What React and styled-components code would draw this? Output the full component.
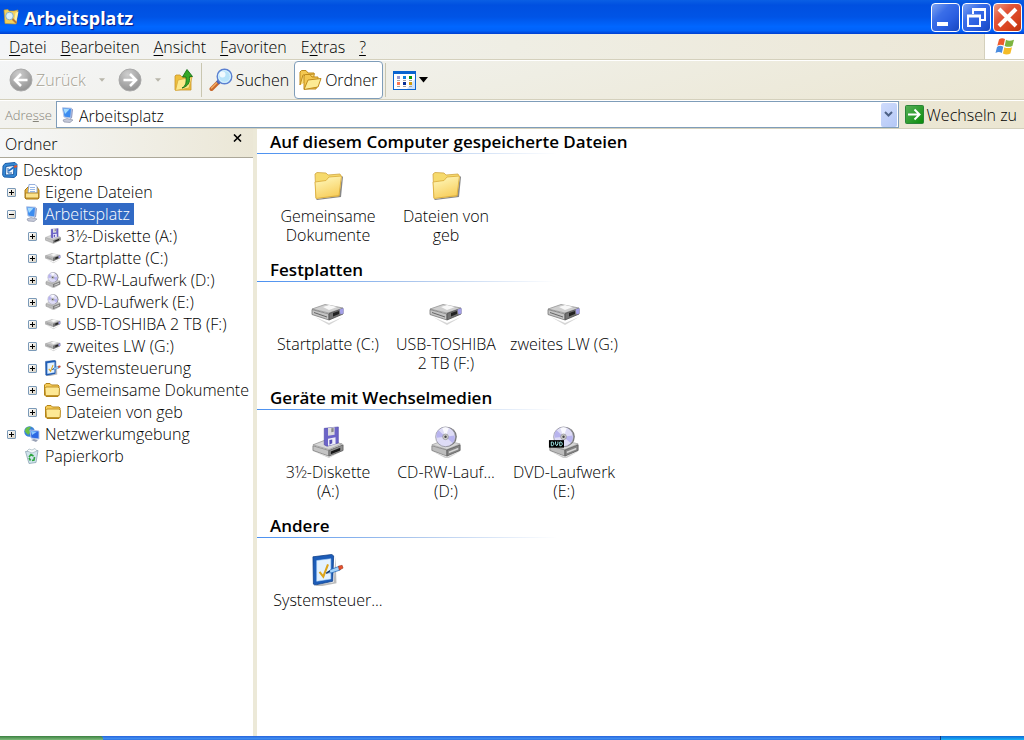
import React from "react";
import styled, { createGlobalStyle } from "styled-components";

const GlobalStyle = createGlobalStyle`
  * {
    box-sizing: border-box;
  }
  body {
    margin: 0;
    background: white;
    color: black;
    font-family: "Open Sans", "Noto Sans", sans-serif;
    font-size: 16px;
    font-weight: 300;
    line-height: 20px;
  }
  button,
  input {
    font: inherit;
    color: inherit;
    margin: 0;
    padding: 0;
    border: 0;
    background: none;
  }
  svg {
    display: block;
    flex: none;
  }
`;

const Window = styled.div`
  display: flex;
  flex-direction: column;
  min-height: 100vh;
`;

const TitleBar = styled.header`
  display: flex;
  align-items: center;
  height: 34px;
  padding: 0 2px 0 3px;
  gap: 5px;
  background: linear-gradient(
    #0a5fe4 0%,
    #0050e0 15%,
    #0054e6 50%,
    #0066ff 78%,
    #0062fa 90%,
    #003fd0 100%
  );
`;

const Title = styled.h1`
  flex: 1;
  margin: 0;
  padding-top: 1px;
  font-family: "Noto Sans", sans-serif;
  font-size: 18px;
  font-weight: 700;
  line-height: 24px;
  color: white;
  text-shadow: 1px 1px 1px #0a1883;
`;

const WindowButtons = styled.div`
  display: flex;
  gap: 2px;
`;

const WindowButton = styled.button`
  display: grid;
  place-items: center;
  width: 29px;
  height: 29px;
  border: 1px solid white;
  border-radius: 4px;
  background: ${(props) =>
    props.$close
      ? "linear-gradient(135deg, #eb9a84, #e2553a 35%, #d8431f 70%, #b8330f)"
      : "linear-gradient(135deg, #7ea4f2, #3a6ee8 35%, #2a5ee0 65%, #1746c0)"};
`;

const MenuBar = styled.nav`
  display: flex;
  height: 26px;
  border-bottom: 1px solid #d4d0bc;
  background: linear-gradient(90deg, #f4f5f6, #efeee4 50%, #ece7d6);
`;

const MenuItems = styled.div`
  display: flex;
  flex: 1;
  padding-left: 2px;
`;

const MenuItem = styled.button`
  padding: 0 7px;
  u {
    text-underline-offset: 2px;
  }
`;

const Flag = styled.div`
  display: grid;
  place-items: center;
  width: 40px;
  border-left: 1px solid #d4d0bc;
  background: white;
`;

const ToolBar = styled.div`
  display: flex;
  align-items: center;
  height: 40px;
  padding-left: 4px;
  border-top: 1px solid white;
  border-bottom: 1px solid #d4d0bc;
  background: linear-gradient(165deg, #f4f5f6, #efeee4 50%, #ebe6d2);
`;

const ToolButton = styled.button`
  display: flex;
  align-items: center;
  gap: 3px;
  height: 38px;
  padding: 0 4px;
  border: 1px solid ${(props) => (props.$pressed ? "#7f9db9" : "transparent")};
  border-radius: 4px;
  background: ${(props) => (props.$pressed ? "white" : "none")};
  &:disabled {
    color: #a5a294;
    text-shadow: 1px 1px 0 white;
  }
`;

const DropButton = styled.button`
  display: grid;
  place-items: center;
  width: 22px;
  height: 36px;
`;

const Separator = styled.div`
  width: 1px;
  height: 34px;
  margin: 0 2px;
  background: #c9c6b0;
`;

const AddressBar = styled.form`
  display: flex;
  height: 29px;
  border-top: 1px solid white;
  border-bottom: 1px solid #d4d0bc;
  background: linear-gradient(90deg, #f2f2ee, #ece8d8 60%, #ebe6d2);
`;

const AddressLabel = styled.label`
  width: 56px;
  padding: 4px 0 0 5px;
  font-size: 13px;
  color: #86847a;
`;

const AddressField = styled.div`
  display: flex;
  align-items: center;
  flex: 1;
  border: 1px solid #7f9db9;
  background: white;
  padding: 0 1px 0 3px;
  gap: 3px;
`;

const AddressInput = styled.input`
  flex: 1;
  min-width: 0;
  height: 24px;
  padding-top: 2px;
  outline: none;
`;

const AddressDrop = styled.button`
  display: grid;
  place-items: center;
  width: 16px;
  height: 24px;
  border-radius: 2px;
  background: linear-gradient(135deg, #cfdcfc, #b4c8f6);
`;

const GoButton = styled.button`
  display: flex;
  align-items: center;
  gap: 3px;
  padding: 0 7px 0 6px;
`;

const Main = styled.div`
  display: flex;
  flex: 1;
`;

const Sidebar = styled.aside`
  flex: none;
  width: 257px;
  border-right: 4px solid #ece9d8;
`;

const SidebarHeader = styled.div`
  display: flex;
  justify-content: space-between;
  height: 29px;
  padding: 4px 9px 0 5px;
  border-bottom: 1px solid #aca899;
  background: linear-gradient(90deg, #f6f7f8, #ebe7d6);
`;

const SidebarTitle = styled.h2`
  margin: 0;
  font-size: 16px;
  font-weight: 300;
  line-height: 22px;
`;

const CloseButton = styled.button`
  display: grid;
  place-items: center;
  width: 13px;
  height: 9px;
`;

const Tree = styled.ul`
  list-style: none;
  margin: 0;
  padding: 1px 0 0;
`;

const TreeRow = styled.li`
  display: flex;
  align-items: center;
  height: 22px;
  padding-left: ${(props) => 2 + Math.max(props.$level - 1, 0) * 21}px;
`;

const ExpanderSlot = styled.span`
  width: 22px;
  padding-left: 5px;
`;

const Expander = styled.button`
  display: grid;
  place-items: center;
  width: 9px;
  height: 9px;
  border: 1px solid #7b9ab8;
  border-radius: 1px;
  background: linear-gradient(135deg, white, #d8d2c4);
`;

const TreeLabel = styled.span`
  margin-left: 3px;
  padding: 0 4px 0 2px;
  line-height: 22px;
  white-space: nowrap;
  color: ${(props) => (props.$selected ? "white" : "black")};
  background: ${(props) => (props.$selected ? "#316ac5" : "none")};
`;

const Content = styled.main`
  flex: 1;
  padding-top: 1px;
`;

const SectionTitle = styled.h2`
  height: 24px;
  margin: 0;
  padding-left: 13px;
  font-size: 17px;
  font-weight: 600;
  line-height: 24px;
  background: linear-gradient(90deg, #4a90f0, #a8c4ec 50%, white) no-repeat left
    bottom / 300px 1px;
`;

const Items = styled.div`
  display: flex;
  flex-wrap: wrap;
  min-height: 104px;
  padding: 16px 0 10px 12px;
`;

const Item = styled.button`
  display: flex;
  flex-direction: column;
  align-items: center;
  gap: 5px;
  width: 118px;
  padding: 0 4px;
  line-height: 19px;
`;

const TaskBar = styled.footer`
  display: flex;
  height: 4px;
  background: linear-gradient(#2663dc, #3f8cf0 60%, #2f74e0);
`;

const StartEdge = styled.div`
  width: 103px;
  border-radius: 0 3px 0 0;
  background: linear-gradient(#3a8040, #7fbb7c);
`;

const TrayEdge = styled.div`
  width: 84px;
  margin-left: auto;
  border-left: 1px solid #123a78;
  background: linear-gradient(#1268d8, #18b4f4);
`;

const TitleIcon = () => (
  <svg width="16" height="16" viewBox="0 0 16 16">
    <path d="M1 1l4-.5 1 1.500h5l4-1-.5 3L13 15l-11-.5z" fill="#f4d25c" stroke="#c89a28" strokeWidth=".6" />
    <path d="M12.500 4l3-1.500-2.500 12-2-2z" fill="#fff0a0" />
    <circle cx="6.500" cy="7" r="3.800" fill="#d8f0fa" stroke="#8cb0c4" />
    <path d="M9.500 10l4 4" stroke="#b87838" strokeWidth="2" />
  </svg>
);

const FlagIcon = () => (
  <svg width="20" height="19" viewBox="0 0 20 19">
    <path d="M4 2.500c2-1.700 4-1.700 6-.4L8.600 8.600c-2-1.300-4-1.300-6.300.2z" fill="#ee5a2c" />
    <path d="M11 2.700c2 1.200 4.300 1.300 8 0L17.400 9c-2.800 1.200-5 1.100-7.700 0z" fill="#7cb440" />
    <path d="M2 10c2-1.700 4-1.600 6.300-.3l-1.500 6.200c-2-1.300-4-1.300-6.300.2z" fill="#4a8ce0" />
    <path d="M9.400 10.200c2.200 1.200 4.700 1.200 7.600 0l-1.600 6.200c-2.500 1.400-5 1.400-7.500 0z" fill="#f4bc28" />
  </svg>
);

const ArrowCircle = ({ forward }) => (
  <svg width="24" height="24" viewBox="0 0 24 24">
    <defs>
      <radialGradient id="greyBall" cx=".4" cy=".25" r=".8">
        <stop offset="0" stopColor="#cecece" />
        <stop offset="1" stopColor="#8e8e8e" />
      </radialGradient>
    </defs>
    <circle cx="12" cy="12" r="11" fill="url(#greyBall)" stroke="#aaa" />
    <path
      d={forward ? "M5.500 12h12M12 6l6 6-6 6" : "M18.500 12h-12M12 6l-6 6 6 6"}
      fill="none"
      stroke="white"
      strokeWidth="2.600"
    />
  </svg>
);

const Caret = ({ color = "black", size = 6 }) => (
  <svg width={size} height={size / 2 + 1} viewBox="0 0 10 6">
    <path d="M0 0h10L5 6z" fill={color} />
  </svg>
);

const UpIcon = () => (
  <svg width="20" height="24" viewBox="0 0 20 24">
    <path d="M1 8l1-1h4l2 2h9v13H1z" fill="#eebf3c" stroke="#c8962a" strokeWidth=".8" />
    <path d="M1.500 22.500L4 12l14-3-3 11z" fill="#fde98c" stroke="#d8a838" strokeWidth=".8" />
    <path d="M8 20c4-2 4.500-6 4-11H8.500L13 1.500l5.500 7H15.500c.7 6-1.500 10-7.500 11.500z" fill="#35a828" stroke="#187018" strokeWidth=".9" />
  </svg>
);

const SearchIcon = () => (
  <svg width="24" height="24" viewBox="0 0 24 24">
    <path d="M2.500 21l7-7" stroke="#c8682c" strokeWidth="4" strokeLinecap="round" />
    <path d="M2.500 20l6-6" stroke="#f4ac64" strokeWidth="1.400" strokeLinecap="round" />
    <path d="M8.500 15l2-2" stroke="#4c64b8" strokeWidth="4" />
    <circle cx="15.500" cy="8.500" r="7.300" fill="#b8e4fa" stroke="#5c80d0" strokeWidth="1.400" />
    <circle cx="15.500" cy="8.500" r="5.800" fill="none" stroke="#dcf2fe" />
    <circle cx="13.500" cy="6.500" r="3" fill="white" opacity=".8" />
  </svg>
);

const FoldersIcon = () => (
  <svg width="23" height="22" viewBox="0 0 23 22">
    <path d="M1 16V3l1.500-1.500H7l2 2.500h6v4" fill="#f4c850" stroke="#c08c1c" />
    <path d="M1 16L4 6l12-1" fill="#fbe080" stroke="#c08c1c" />
    <path d="M5 20V7l1.500-1.500H11l2 2.500h6v4l-2 8z" fill="#f4c850" stroke="#c08c1c" />
    <path d="M5 20.500L9 11l13-1.500L19 18z" fill="#fdeb94" stroke="#c08c1c" />
  </svg>
);

const ViewsIcon = () => (
  <svg width="23" height="19" viewBox="0 0 23 19">
    <rect x=".5" y=".5" width="22" height="18" fill="white" stroke="#0a64d0" />
    <path d="M14 18l8-10v10z" fill="#cfe2fa" />
    <path d="M0 0h23v3H0z" fill="#0a64d0" />
    <path d="M4 5h3v3H4z" fill="#9a98d0" />
    <path d="M10 5h3v3h-3z" fill="#0a80e0" />
    <path d="M16 5h3v3h-3z" fill="#0a980a" />
    <path d="M4 11h3v3H4z" fill="#ff7850" />
    <path d="M10 11h3v3h-3z" fill="#083098" />
    <path d="M16 11h3v3h-3z" fill="#d09a08" />
    <path d="M4 9.500h3M10 9.500h3M16 9.500h3M4 15.500h3M10 15.500h3M16 15.500h3" stroke="#a4a4a4" />
  </svg>
);

const GoIcon = () => (
  <svg width="19" height="19" viewBox="0 0 19 19">
    <defs>
      <linearGradient id="goGreen" x1="0" y1="0" x2="1" y2="1">
        <stop offset="0" stopColor="#58b058" />
        <stop offset="1" stopColor="#0a8c0a" />
      </linearGradient>
    </defs>
    <rect x=".5" y=".5" width="18" height="18" rx="1" fill="url(#goGreen)" stroke="#2c8438" />
    <path d="M3 9.500h11M9.500 4.500l5 5-5 5" fill="none" stroke="white" strokeWidth="2" />
  </svg>
);

const ComputerIcon = () => (
  <svg width="16" height="16" viewBox="0 0 16 16">
    <path d="M3 13l4-1.500 6 1.500-3 2.500-6-.5z" fill="#c4c8d8" stroke="#8088a0" strokeWidth=".6" />
    <path d="M11 1l2 1.500-1 8.500-2 1z" fill="#8c94bc" />
    <path d="M2.500.8l9 .4-.8 9.800L4 10z" fill="#3c8cf0" stroke="#b4c4e4" />
    <path d="M3.500 1.800l6 .5L5 7z" fill="#a4dcff" />
  </svg>
);

const DesktopIcon = () => (
  <svg width="16" height="16" viewBox="0 0 16 16">
    <path d="M3 1.500l10-1 2 2-.5 11-2.500 2-10-.5L.7 13 1 4z" fill="#3488d4" stroke="#1c5ca8" />
    <path d="M4 4.500l8-1-.5 9-8 .5z" fill="#f0f8ff" stroke="#0c4894" strokeWidth=".8" />
    <path d="M6.500 9l5.500-4" stroke="#1c6cc8" strokeWidth="1.600" />
    <path d="M12 5l3-1" stroke="#e05028" strokeWidth="2" />
    <path d="M6 6v5h4" fill="none" stroke="#1c5ca8" />
  </svg>
);

const DocumentsIcon = () => (
  <svg width="16" height="16" viewBox="0 0 16 16">
    <path d="M1 6l3-3h9l2 3v8l-1 1H2l-1-1z" fill="#e8b43c" stroke="#a87818" />
    <path d="M5 .5h6l2 2V9H4z" fill="white" stroke="#7c9cd4" strokeWidth=".8" />
    <path d="M6 3.500h5M6 5.500h5M6 7.500h5" stroke="#8cb0e4" strokeWidth=".9" />
    <path d="M1.500 9h13v5h-13z" fill="#fbe28c" stroke="#a87818" strokeWidth=".8" />
  </svg>
);

const NetworkIcon = () => (
  <svg width="16" height="16" viewBox="0 0 16 16">
    <circle cx="5.500" cy="5.500" r="5.300" fill="#3c84d8" />
    <path d="M1 4c1-3 4-4 6-3L5 4l2 2-3 3C3 7 1 7 1 4z" fill="#68c048" />
    <path d="M6 4l9 1v8l-8-1z" fill="#2c68e4" stroke="#b4c4e8" strokeWidth=".9" />
    <path d="M7 5l6 .7L8 9z" fill="#8cc8ff" />
    <path d="M7 14l3-1 4 1-2 2z" fill="#98a0b4" />
  </svg>
);

const TrashIcon = () => (
  <svg width="16" height="16" viewBox="0 0 16 16">
    <path d="M1.500 3.500l12.500-1-2 12-7 1z" fill="#d0e4ec" stroke="#8ca4b4" strokeWidth=".8" />
    <path d="M3 3l2-2 3 1 3-1.500L13 3l-5 2z" fill="#f6fafc" stroke="#94a8b4" strokeWidth=".6" />
    <path d="M5 9l2-2.500L9.500 8M10.500 9l-.5 3-2 .5M6.500 12.500L5 10" fill="none" stroke="#2ca43c" strokeWidth="1.600" />
  </svg>
);

const SmallFolderIcon = () => (
  <svg width="16" height="14" viewBox="0 0 16 14">
    <path d="M.5 12V2L2 .5h4L7.500 2H14l1 1v9l-1 1.500H2z" fill="#f6cc58" stroke="#b48418" />
    <path d="M1 5.500L2 4h12l1.500 1.500L15 12.500H1.500z" fill="#fde894" stroke="#b48418" strokeWidth=".8" />
  </svg>
);

const FolderIcon = () => (
  <svg width="32" height="32" viewBox="0 0 32 32">
    <defs>
      <linearGradient id="folderFront" x1="0" y1="0" x2="0.400" y2="1">
        <stop offset="0" stopColor="#fffbc4" />
        <stop offset="1" stopColor="#f8d060" />
      </linearGradient>
    </defs>
    <path d="M4 29l23-3 3-20 1 1-2 20-24 3z" fill="#555" opacity=".7" />
    <path d="M3 4l2-1.500 9 .5 2 2 12-1 1 2-2 20-23 2z" fill="#f6da6c" stroke="#d0a440" strokeWidth=".8" />
    <path d="M3 12l11-1.500L17 7l12.500-1L27 25.500 4 28.500z" fill="url(#folderFront)" stroke="#dcb040" strokeWidth=".9" />
  </svg>
);

const HardDriveIcon = ({ size = 34 }) => (
  <svg width={size} height={size === 34 ? 32 : 16} viewBox="0 0 34 32">
    <path d="M4 19l14 6 14-6-14 8z" fill="#999" opacity=".4" />
    <path d="M1 11l13-4.500 18 3.500-14 5z" fill="#cfcfcf" stroke="#969696" strokeWidth=".8" />
    <path d="M12 9l6-2 8 2-8 3z" fill="#f8f8f8" />
    <path d="M1 11.500l17 4.500v6L1 16.500z" fill="#c4c4c4" stroke="#777" strokeWidth=".8" />
    <path d="M3 14.500l13 4.500" stroke="#666" />
    <path d="M18 15.500l14-5v5.500l-14 6z" fill="#747474" stroke="#4c4c4c" strokeWidth=".8" />
    <path d="M22 15l6-2v3l-6 2.500z" fill="#222" />
    <path d="M28.500 11.500l4-1.500v5.500l-3 1z" fill="#a4a0e8" />
  </svg>
);

const FloppyIcon = ({ size = 34 }) => (
  <svg width={size} height={size === 34 ? 32 : 16} viewBox="0 0 34 34">
    <path d="M2 27l16 6 15-7-15 8z" fill="#999" opacity=".5" />
    <path d="M1 20l13-5 18 4-14 6z" fill="#d8d8d8" stroke="#969696" strokeWidth=".8" />
    <path d="M1 21l17 5v6L1 26z" fill="#c4c4c4" stroke="#777" strokeWidth=".8" />
    <path d="M18 26l15-6v6l-15 6z" fill="#909090" stroke="#555" strokeWidth=".8" />
    <path d="M20 27l10-4v3l-10 4z" fill="#181818" />
    <path d="M13 2.500L28 1v17l-12 3.500-3-1.500z" fill="#6c64c8" stroke="#4840a0" strokeWidth=".6" />
    <path d="M17 2l7-.7v8l-7 1z" fill="#dcdcdc" />
    <path d="M20.500 2.500l2.500-.3v4l-2.500.5z" fill="#888" />
    <path d="M17 13.500l8-1.500v7l-8 2z" fill="#f0f0fa" />
    <path d="M18.500 15l3-.7v4l-3 1.500z" fill="#5850b4" />
  </svg>
);

const DiscIcon = ({ size = 34, dvd = false }) => (
  <svg width={size} height={size === 34 ? 32 : 16} viewBox="0 0 34 34">
    <path d="M3 27l15 6 14-6-14 8z" fill="#999" opacity=".5" />
    <path d="M2 20l13-5 17 4-14 6z" fill="#d8d8d8" stroke="#a4a4a4" strokeWidth=".8" />
    <path d="M2 21l16 4.500V32L2 26z" fill="#bcbcbc" stroke="#777" strokeWidth=".8" />
    <path d="M18 25.500L32 20v6l-14 6z" fill="#848484" stroke="#555" strokeWidth=".8" />
    <path d="M20 27l10-4v2l-10 4z" fill="#d4d4d4" />
    <circle cx="18" cy="11.500" r="10.500" fill="#777" />
    <circle cx="16.500" cy="11.500" r="10.500" fill="#dedcf6" stroke="#8c8c98" strokeWidth=".8" />
    <path d="M16.500 11.500L9 4.500a10 10 0 0 0-2 8z" fill="#b8b4ee" />
    <path d="M16.500 11.500l7.500 6.500a10 10 0 0 0 2-8z" fill="#b8b4f0" />
    <path d="M16.500 11.500L13 2a10 10 0 0 1 7 0z" fill="#fafaff" />
    <circle cx="16.500" cy="11.500" r="3" fill="#d0d0d0" stroke="#888" strokeWidth=".7" />
    <circle cx="16.500" cy="11.500" r="1.300" fill="#444" />
    {dvd && (
      <g>
        <path d="M1 15h16v8H1z" fill="black" />
        <path
          d="M3.500 17v4H5l1-1v-2l-1-1zM8 16.500V19l1.250 2 1.250-2v-2.500M12.500 17v4H14l1-1v-2l-1-1z"
          fill="none"
          stroke="#a8f0f0"
        />
      </g>
    )}
  </svg>
);

const ControlIcon = ({ size = 34 }) => (
  <svg width={size} height={size === 34 ? 32 : 16} viewBox="0 0 34 34">
    <path d="M4 33l19-3 2-27 1 28-20 4z" fill="#777" opacity=".5" />
    <path d="M1 3L21 .5l2 1.500-1 27L3 33l-1.500-1z" fill="#1c5cb8" stroke="#0c3c84" strokeWidth=".8" />
    <path d="M5 7l15-2v21.500L5 29z" fill="#e4f2ff" stroke="#a8d0f8" strokeWidth=".6" />
    <path d="M8 19l4 5 5-13" fill="none" stroke="#dca41c" strokeWidth="2.200" />
    <path d="M16 20l4-3.500 9-3.500 1 4-9 3z" fill="#a4d4fc" stroke="#2468b8" strokeWidth=".8" />
    <path d="M28 13l4-1 1 3-4 2z" fill="#e8502c" stroke="#983018" strokeWidth=".6" />
    <path d="M15 20.500l4-2.500" stroke="#14386c" strokeWidth="1.500" />
  </svg>
);

const treeNodes = [
  { label: "Desktop", level: 0, icon: <DesktopIcon /> },
  { label: "Eigene Dateien", level: 1, expander: "+", icon: <DocumentsIcon /> },
  { label: "Arbeitsplatz", level: 1, expander: "-", icon: <ComputerIcon />, selected: true },
  { label: "3½-Diskette (A:)", level: 2, expander: "+", icon: <FloppyIcon size={16} /> },
  { label: "Startplatte (C:)", level: 2, expander: "+", icon: <HardDriveIcon size={16} /> },
  { label: "CD-RW-Laufwerk (D:)", level: 2, expander: "+", icon: <DiscIcon size={16} /> },
  { label: "DVD-Laufwerk (E:)", level: 2, expander: "+", icon: <DiscIcon size={16} /> },
  { label: "USB-TOSHIBA 2 TB (F:)", level: 2, expander: "+", icon: <HardDriveIcon size={16} /> },
  { label: "zweites LW (G:)", level: 2, expander: "+", icon: <HardDriveIcon size={16} /> },
  { label: "Systemsteuerung", level: 2, expander: "+", icon: <ControlIcon size={16} /> },
  { label: "Gemeinsame Dokumente", level: 2, expander: "+", icon: <SmallFolderIcon /> },
  { label: "Dateien von geb", level: 2, expander: "+", icon: <SmallFolderIcon /> },
  { label: "Netzwerkumgebung", level: 1, expander: "+", icon: <NetworkIcon /> },
  { label: "Papierkorb", level: 1, icon: <TrashIcon /> },
];

const sections = [
  {
    title: "Auf diesem Computer gespeicherte Dateien",
    items: [
      { label: "Gemeinsame Dokumente", icon: <FolderIcon /> },
      { label: "Dateien von geb", icon: <FolderIcon /> },
    ],
  },
  {
    title: "Festplatten",
    items: [
      { label: "Startplatte (C:)", icon: <HardDriveIcon /> },
      { label: "USB-TOSHIBA 2 TB (F:)", icon: <HardDriveIcon /> },
      { label: "zweites LW (G:)", icon: <HardDriveIcon /> },
    ],
  },
  {
    title: "Geräte mit Wechselmedien",
    items: [
      { label: "3½-Diskette (A:)", icon: <FloppyIcon /> },
      { label: "CD-RW-Lauf... (D:)", icon: <DiscIcon /> },
      { label: "DVD-Laufwerk (E:)", icon: <DiscIcon dvd /> },
    ],
  },
  {
    title: "Andere",
    items: [{ label: "Systemsteuer...", icon: <ControlIcon /> }],
  },
];

const App = () => {
  return (
    <Window>
      <GlobalStyle />
      <TitleBar>
        <TitleIcon />
        <Title>Arbeitsplatz</Title>
        <WindowButtons>
          <WindowButton aria-label="Minimieren">
            <svg width="21" height="21" viewBox="0 0 21 21">
              <path d="M2 15h11v4H2z" fill="white" />
            </svg>
          </WindowButton>
          <WindowButton aria-label="Verkleinern">
            <svg width="21" height="21" viewBox="0 0 21 21">
              <path d="M7 7V2h12v11h-4" fill="none" stroke="white" strokeWidth="2" />
              <path d="M6 2.500h14" stroke="white" strokeWidth="3" />
              <path d="M2 9h12v10H2z" fill="none" stroke="white" strokeWidth="2" />
              <path d="M1 9h14" stroke="white" strokeWidth="3" />
            </svg>
          </WindowButton>
          <WindowButton $close aria-label="Schließen">
            <svg width="21" height="21" viewBox="0 0 21 21">
              <path d="M2 2l17 17M19 2L2 19" stroke="white" strokeWidth="4" />
            </svg>
          </WindowButton>
        </WindowButtons>
      </TitleBar>

      <MenuBar>
        <MenuItems>
          <MenuItem><u>D</u>atei</MenuItem>
          <MenuItem><u>B</u>earbeiten</MenuItem>
          <MenuItem><u>A</u>nsicht</MenuItem>
          <MenuItem><u>F</u>avoriten</MenuItem>
          <MenuItem>E<u>x</u>tras</MenuItem>
          <MenuItem><u>?</u></MenuItem>
        </MenuItems>
        <Flag>
          <FlagIcon />
        </Flag>
      </MenuBar>

      <ToolBar>
        <ToolButton disabled>
          <ArrowCircle />
          Zurück
        </ToolButton>
        <DropButton disabled aria-label="Zurück-Liste">
          <Caret color="#b8b6aa" />
        </DropButton>
        <ToolButton disabled aria-label="Vorwärts">
          <ArrowCircle forward />
        </ToolButton>
        <DropButton disabled aria-label="Vorwärts-Liste">
          <Caret color="#b8b6aa" />
        </DropButton>
        <ToolButton aria-label="Aufwärts">
          <UpIcon />
        </ToolButton>
        <Separator />
        <ToolButton>
          <SearchIcon />
          Suchen
        </ToolButton>
        <ToolButton $pressed aria-pressed="true">
          <FoldersIcon />
          Ordner
        </ToolButton>
        <Separator />
        <ToolButton aria-label="Ansichten">
          <ViewsIcon />
          <Caret size={9} />
        </ToolButton>
      </ToolBar>

      <AddressBar onSubmit={(e) => e.preventDefault()}>
        <AddressLabel htmlFor="address">
          Adre<u>s</u>se
        </AddressLabel>
        <AddressField>
          <ComputerIcon />
          <AddressInput id="address" defaultValue="Arbeitsplatz" />
          <AddressDrop type="button" aria-label="Adressliste">
            <svg width="9" height="7" viewBox="0 0 9 7">
              <path d="M1 1l3.500 3.500L8 1" fill="none" stroke="#4d6185" strokeWidth="2" />
            </svg>
          </AddressDrop>
        </AddressField>
        <GoButton>
          <GoIcon />
          Wechseln zu
        </GoButton>
      </AddressBar>

      <Main>
        <Sidebar>
          <SidebarHeader>
            <SidebarTitle>Ordner</SidebarTitle>
            <CloseButton aria-label="Ordnerleiste schließen">
              <svg width="9" height="8" viewBox="0 0 9 8">
                <path d="M1 .5l7 7M8 .5l-7 7" stroke="black" strokeWidth="1.600" />
              </svg>
            </CloseButton>
          </SidebarHeader>
          <Tree>
            {treeNodes.map((node) => (
              <TreeRow key={node.label} $level={node.level}>
                {node.level > 0 && (
                  <ExpanderSlot>
                    {node.expander && (
                      <Expander aria-label={node.label}>
                        <svg width="5" height="5" viewBox="0 0 5 5">
                          <path d="M0 2h5v1H0z" />
                          {node.expander === "+" && <path d="M2 0h1v5H2z" />}
                        </svg>
                      </Expander>
                    )}
                  </ExpanderSlot>
                )}
                {node.icon}
                <TreeLabel $selected={node.selected}>{node.label}</TreeLabel>
              </TreeRow>
            ))}
          </Tree>
        </Sidebar>

        <Content>
          {sections.map((section) => (
            <section key={section.title}>
              <SectionTitle>{section.title}</SectionTitle>
              <Items>
                {section.items.map((item) => (
                  <Item key={item.label}>
                    {item.icon}
                    {item.label}
                  </Item>
                ))}
              </Items>
            </section>
          ))}
        </Content>
      </Main>

      <TaskBar>
        <StartEdge />
        <TrayEdge />
      </TaskBar>
    </Window>
  );
};

export default App;
